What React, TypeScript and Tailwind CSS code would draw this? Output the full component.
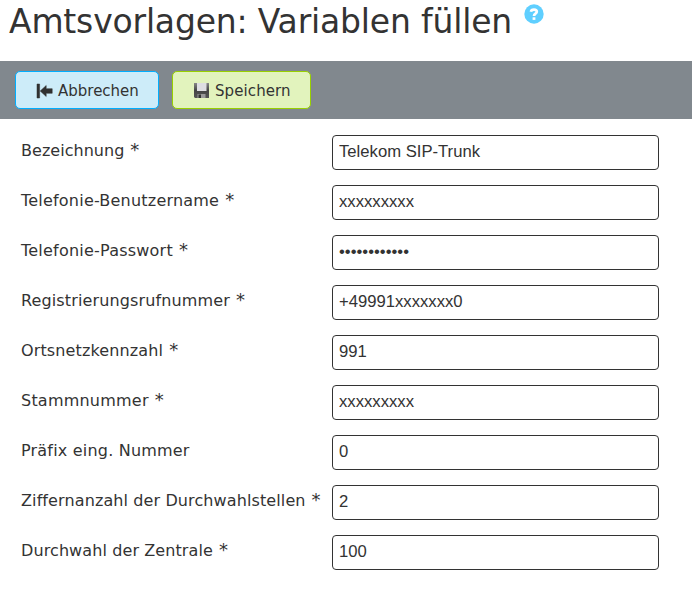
const rows = [
  { label: "Bezeichnung", required: true, value: "Telekom SIP-Trunk", tracking: "tracking-[0.03px]" },
  { label: "Telefonie-Benutzername", required: true, value: "xxxxxxxxx", tracking: "tracking-[0.21px]" },
  { label: "Telefonie-Passwort", required: true, value: "••••••••••••", tracking: "tracking-[0.22px]" },
  { label: "Registrierungsrufnummer", required: true, value: "+49991xxxxxxx0", tracking: "tracking-[0.13px]" },
  { label: "Ortsnetzkennzahl", required: true, value: "991", tracking: "tracking-[0.13px]" },
  { label: "Stammnummer", required: true, value: "xxxxxxxxx", tracking: "tracking-[0.22px]" },
  { label: "Präfix eing. Nummer", required: false, value: "0", tracking: "tracking-[0.2px]" },
  { label: "Ziffernanzahl der Durchwahlstellen", required: true, value: "2", tracking: "tracking-[0.11px]" },
  { label: "Durchwahl der Zentrale", required: true, value: "100", tracking: "tracking-[0.1px]" },
];

function HelpIcon() {
  return (
    <svg className="ml-3 mt-1" width="20" height="20" viewBox="0 0 20 20">
      <circle cx="10" cy="10" r="9.7" fill="#5fcfff" />
      <path d="M6.9 7.8C7.3 4.8 12.8 4.8 12.8 7.8C12.8 9.8 10 9.6 10 12" fill="none" stroke="white" strokeWidth="2.7" />
      <rect x="8.6" y="13.3" width="2.8" height="2.6" fill="white" />
    </svg>
  );
}

function BackIcon() {
  return (
    <svg className="mr-[5px]" width="17" height="16" viewBox="0 0 17 16">
      <path
        d="M1 1h2.6v14H1zM4.200 8l6-5.500v3.200h6v4.600h-6v3.200z"
        fill="#303030"
        stroke="#303030"
        strokeOpacity="0.5"
        strokeWidth="1"
      />
    </svg>
  );
}

function DiskIcon() {
  return (
    <svg className="mr-[5px]" width="17" height="17" viewBox="0 0 17 17">
      <defs>
        <linearGradient id="disk" x1="0" y1="0" x2="0" y2="1">
          <stop offset="0" stopColor="#888" />
          <stop offset="0.5" stopColor="#444" />
          <stop offset="1" stopColor="#555" />
        </linearGradient>
      </defs>
      <path d="M1 1h15v15H2l-1-1z" fill="url(#disk)" />
      <path d="M4 1h9.500v8H4z" fill="#dedee2" />
      <path d="M4.500 12h8v4h-8z" fill="#999" />
      <path d="M5.500 12.500h2.500V16H5.500z" fill="#333" />
    </svg>
  );
}

export default function App() {
  return (
    <div className="h-[593px] w-[692px] overflow-hidden bg-white font-['DejaVu_Sans',sans-serif] text-[#333]">
      <header className="flex h-[61px] items-start pl-[9px]">
        <h1 className="w-[503px] whitespace-nowrap text-[33px] leading-[43px] tracking-[-0.18px]">Amtsvorlagen: Variablen füllen</h1>
        <HelpIcon />
      </header>
      <div className="flex h-[58px] gap-[13px] bg-[#81888e] pl-[15px] pt-[10px]">
        <button className="flex h-[38px] w-[144px] items-center rounded-[5px] border border-[#00aeff] bg-[#cdecf9] pl-5 pt-px text-[15px]">
          <BackIcon />
          <span className="pt-[2px]">Abbrechen</span>
        </button>
        <button className="flex h-[38px] w-[139px] items-center rounded-[5px] border border-[#99d000] bg-[#e2f3bd] pl-5 pt-px text-[15px]">
          <DiskIcon />
          <span className="pt-[2px] tracking-[0.1px]">Speichern</span>
        </button>
      </div>
      <main className="flex flex-col gap-[15px] pt-4">
        {rows.map(({ label, required, value, tracking }) => (
          <div key={label} className="flex h-[35px] pl-[21px]">
            <label className="w-[311px] whitespace-nowrap pt-1 text-[16px] leading-[24px]">
              <span className={tracking}>{label}</span>
              {required && <span className="ml-[6px] text-[18px] leading-none">*</span>}
            </label>
            <input
              readOnly
              value={value}
              className="h-[35px] w-[327px] rounded-[4px] border border-[#333] px-[6px] pb-[2px] font-['Liberation_Sans',sans-serif] text-[16.67px]"
            />
          </div>
        ))}
      </main>
    </div>
  );
}
